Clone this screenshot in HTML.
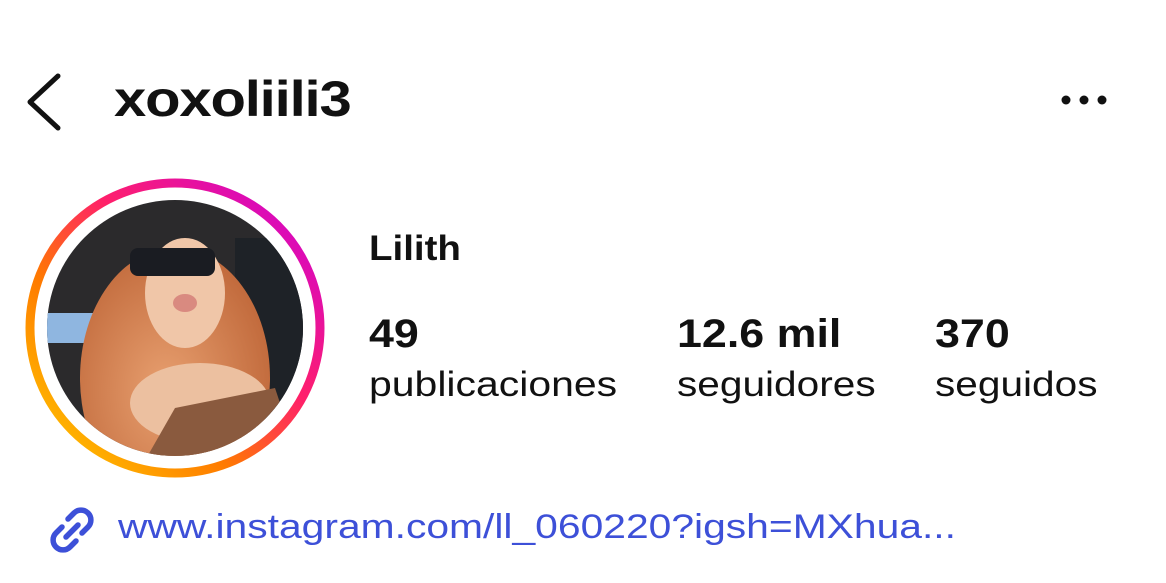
<!DOCTYPE html>
<html><head><meta charset="utf-8"><style>
body{margin:0;width:1166px;height:583px;background:#fff;position:relative;overflow:hidden;font-family:"Liberation Sans",sans-serif;color:#111}
.a{position:absolute;white-space:nowrap;transform-origin:0 50%}
</style></head><body>
<svg class="a" style="left:22px;top:72px" width="44" height="60" viewBox="0 0 44 60"><path d="M36 4 L8 30 L36 56" fill="none" stroke="#111" stroke-width="5" stroke-linecap="round" stroke-linejoin="round"/></svg>
<div class="a" style="left:114px;top:70px;font-size:50px;font-weight:bold;letter-spacing:-1px;transform:scaleX(1.16)">xoxoliili3</div>
<svg class="a" style="left:1058px;top:92px" width="52" height="16"><circle cx="8" cy="8" r="4.5" fill="#111"/><circle cx="26" cy="8" r="4.5" fill="#111"/><circle cx="44" cy="8" r="4.5" fill="#111"/></svg>
<svg class="a" style="left:25px;top:178px" width="300" height="300" viewBox="0 0 300 300">
<defs>
<linearGradient id="g" x1="0" y1="1" x2="1" y2="0"><stop offset="0" stop-color="#ffd200"/><stop offset=".35" stop-color="#ff7a00"/><stop offset=".6" stop-color="#ff1f6b"/><stop offset="1" stop-color="#c800e0"/></linearGradient>
<clipPath id="c"><circle cx="150" cy="150" r="128"/></clipPath>
<radialGradient id="hair" cx=".45" cy=".55" r=".6"><stop offset="0" stop-color="#e8a070"/><stop offset="1" stop-color="#c0683a"/></radialGradient>
</defs>
<circle cx="150" cy="150" r="145" fill="none" stroke="url(#g)" stroke-width="9"/>
<g clip-path="url(#c)">
<rect width="300" height="300" fill="#2b2a2c"/>
<rect x="20" y="135" width="90" height="30" fill="#8fb6e0"/>
<rect x="190" y="100" width="60" height="60" fill="#9cc0e8"/>
<rect x="210" y="60" width="90" height="200" fill="#1e2227"/>
<ellipse cx="150" cy="200" rx="95" ry="130" fill="url(#hair)"/>
<ellipse cx="160" cy="115" rx="40" ry="55" fill="#f0c6a8"/>
<rect x="105" y="70" width="85" height="28" rx="8" fill="#1a1c22"/>
<ellipse cx="160" cy="125" rx="12" ry="9" fill="#d98a80"/>
<ellipse cx="175" cy="225" rx="70" ry="40" fill="#ecc0a0"/>
<path d="M110 300 L150 230 L250 210 L280 300Z" fill="#8a5a3e"/>
</g>
</svg>
<div class="a" style="left:369px;top:229px;font-size:35px;font-weight:bold;transform:scaleX(1.1)">Lilith</div>
<div class="a" style="left:369px;top:312px;font-size:40px;font-weight:bold;transform:scaleX(1.12)">49</div>
<div class="a" style="left:369px;top:365px;font-size:35px;transform:scaleX(1.17)">publicaciones</div>
<div class="a" style="left:677px;top:312px;font-size:40px;font-weight:bold;transform:scaleX(1.12)">12.6 mil</div>
<div class="a" style="left:677px;top:365px;font-size:35px;transform:scaleX(1.16)">seguidores</div>
<div class="a" style="left:935px;top:312px;font-size:40px;font-weight:bold;transform:scaleX(1.12)">370</div>
<div class="a" style="left:935px;top:365px;font-size:35px;transform:scaleX(1.16)">seguidos</div>
<svg class="a" style="left:46px;top:505px" width="52" height="50" viewBox="0 0 52 50"><g fill="none" stroke="#3d50d8" stroke-width="5.5" stroke-linecap="round"><path d="M22 14 L28 8 A9 9 0 0 1 42 22 L36 28"/><path d="M30 36 L24 42 A9 9 0 0 1 10 28 L16 22"/><path d="M20 32 L32 20"/></g></svg>
<div class="a" style="left:118px;top:508px;font-size:34px;color:#3d50d8;transform:scaleX(1.2)">www.instagram.com/ll_060220?igsh=MXhua...</div>
</body></html>
